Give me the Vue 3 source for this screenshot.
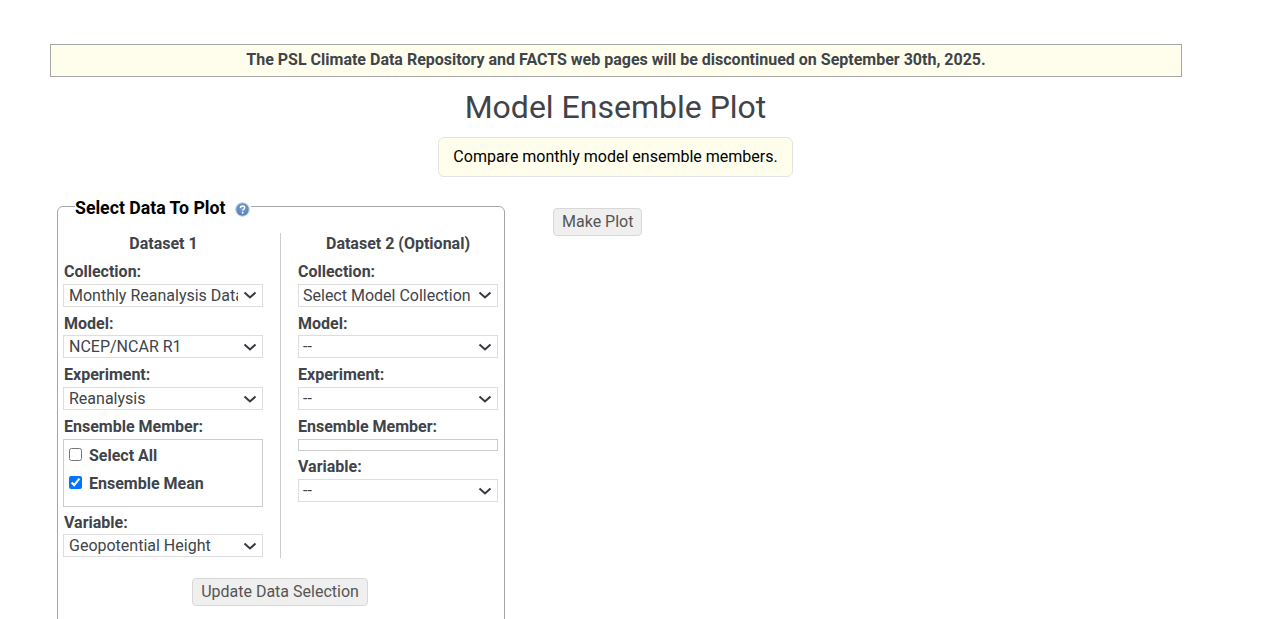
<script setup>
import { ref } from 'vue'

const first = [
  { label: 'Collection:', value: 'Monthly Reanalysis Data', options: ['Monthly Reanalysis Data'] },
  { label: 'Model:', value: 'NCEP/NCAR R1', options: ['NCEP/NCAR R1'] },
  { label: 'Experiment:', value: 'Reanalysis', options: ['Reanalysis'] },
]
const second = [
  { label: 'Collection:', value: 'Select Model Collection', options: ['Select Model Collection'] },
  { label: 'Model:', value: '--', options: ['--'] },
  { label: 'Experiment:', value: '--', options: ['--'] },
]

const selectAll = ref(false)
const ensembleMean = ref(true)
</script>

<template>
  <div class="page">
    <div class="banner">The PSL Climate Data Repository and FACTS web pages will be discontinued on September 30th, 2025.</div>
    <h1 class="title">Model Ensemble Plot</h1>
    <div class="note-row">
      <div class="note">Compare monthly model ensemble members.</div>
    </div>

    <div class="main">
      <fieldset class="panel">
        <legend class="panel-title">
          Select Data To Plot
          <svg class="help" viewBox="0 0 16 16" width="15" height="15">
            <defs>
              <radialGradient id="helpfill" cx="50%" cy="40%" r="60%">
                <stop offset="0" stop-color="#7ea3d6" />
                <stop offset="1" stop-color="#4f7db8" />
              </radialGradient>
            </defs>
            <circle cx="8" cy="8" r="7.2" fill="url(#helpfill)" stroke="#c5d3e6" stroke-width="1.2" />
            <path d="M5.8 6.3c0-1.3 1-2 2.3-2s2.2.8 2.2 1.9c0 1.6-2 1.6-2 3.1" fill="none" stroke="#fff" stroke-width="1.5" />
            <circle cx="8.2" cy="11.5" r="1" fill="#fff" />
          </svg>
        </legend>

        <div class="columns">
          <div class="col col-left">
            <div class="col-title">Dataset 1</div>
            <div v-for="f in first" :key="f.label" class="field">
              <label class="lbl">{{ f.label }}</label>
              <select class="sel" :value="f.value">
                <option v-for="o in f.options" :key="o">{{ o }}</option>
              </select>
            </div>
            <div class="field">
              <label class="lbl">Ensemble Member:</label>
              <div class="members">
                <label class="member"><input type="checkbox" v-model="selectAll" /> Select All</label>
                <label class="member"><input type="checkbox" v-model="ensembleMean" /> Ensemble Mean</label>
              </div>
            </div>
            <div class="field">
              <label class="lbl">Variable:</label>
              <select class="sel">
                <option>Geopotential Height</option>
              </select>
            </div>
          </div>

          <div class="col col-right">
            <div class="col-title">Dataset 2 (Optional)</div>
            <div v-for="f in second" :key="f.label" class="field">
              <label class="lbl">{{ f.label }}</label>
              <select class="sel" :value="f.value">
                <option v-for="o in f.options" :key="o">{{ o }}</option>
              </select>
            </div>
            <div class="field">
              <label class="lbl">Ensemble Member:</label>
              <div class="members-empty"></div>
            </div>
            <div class="field">
              <label class="lbl">Variable:</label>
              <select class="sel">
                <option>--</option>
              </select>
            </div>
          </div>
        </div>

        <div class="update-row">
          <button class="btn update-btn" type="button">Update Data Selection</button>
        </div>
      </fieldset>

      <button class="btn plot-btn" type="button">Make Plot</button>
    </div>
  </div>
</template>

<style scoped>
.page {
  width: 1132px;
  margin-left: 50px;
  padding-top: 44px;
  font-family: Roboto, "Liberation Sans", sans-serif;
  font-size: 16px;
  color: #40444a;
}
.banner {
  height: 33px;
  line-height: 29px;
  box-sizing: border-box;
  border: 1px solid #a6a6a6;
  background: #fffeec;
  text-align: center;
  font-weight: 700;
}
.title {
  margin: 8px 1px 0 0;
  font-size: 32px;
  font-weight: 400;
  line-height: 44px;
  text-align: center;
  color: #40444a;
}
.note-row {
  display: flex;
  justify-content: center;
  margin-top: 8px;
  padding-right: 1px;
}
.note {
  height: 40px;
  box-sizing: border-box;
  padding: 0 14px;
  line-height: 38px;
  border: 1px solid #e3e3e3;
  border-radius: 6px;
  background: #fffeec;
  color: #000;
}
.main {
  display: flex;
  align-items: flex-start;
  margin-top: 15px;
  padding-left: 7px;
}
.panel {
  width: 448px;
  box-sizing: border-box;
  margin: 0;
  padding: 0 6px 60px 5px;
  border: 1px solid #a6a6a6;
  border-radius: 6px;
}
.panel-title {
  padding: 4px 1px 0 0;
  margin-left: 12px;
  font-size: 17.7px;
  font-weight: 700;
  color: #000;
  line-height: 24px;
}
.help {
  vertical-align: -3px;
  margin-left: 5px;
}
.columns {
  display: flex;
  margin-top: 13px;
}
.col {
  width: 200px;
}
.col-left {
  padding-right: 17px;
  border-right: 1px solid #ccc;
  height: 325px;
}
.col-right {
  margin-left: 17px;
}
.col-title {
  font-weight: 700;
  text-align: center;
  line-height: 21px;
  height: 21px;
}
.col-left .col-title {
  padding-left: 1px;
}
.field {
  margin-top: 5.7px;
}
.col-title + .field {
  margin-top: 7px;
}
.lbl {
  display: block;
  font-weight: 700;
  line-height: 21px;
  height: 21px;
}
.col-left .lbl {
  padding-left: 1px;
}
.sel {
  display: block;
  width: 100%;
  height: 23px;
  margin-top: 1.9px;
  box-sizing: border-box;
  padding: 0 24px 0 5px;
  border: 1px solid #ddd;
  border-radius: 0;
  appearance: none;
  background: #fff url("data:image/svg+xml,%3Csvg xmlns='http://www.w3.org/2000/svg' width='14' height='8' viewBox='0 0 14 8'%3E%3Cpath d='M1.5 1.5 7 6.5l5.5-5' fill='none' stroke='%23343a40' stroke-width='2'/%3E%3C/svg%3E") no-repeat right 5px center;
  font-family: inherit;
  font-size: 16px;
  color: #40444a;
}
.col-right .sel {
  padding-left: 4px;
}
.members {
  height: 68px;
  box-sizing: border-box;
  margin-top: 1.9px;
  margin-bottom: -0.75px;
  padding: 1px 5px;
  border: 1px solid #ccc;
}
.member {
  display: flex;
  align-items: center;
  gap: 7px;
  height: 28px;
  box-sizing: border-box;
  padding-top: 2px;
  font-weight: 700;
}
.member input {
  width: 13px;
  height: 13px;
  margin: 0 0 2px;
}
.members-empty {
  height: 12px;
  margin-top: 1.9px;
  box-sizing: border-box;
  border: 1px solid #ccc;
}
.update-row {
  display: flex;
  justify-content: center;
  margin-top: 20px;
  padding-right: 1px;
}
.btn {
  height: 28px;
  box-sizing: border-box;
  padding: 0 8px 2px;
  border: 1px solid #d8d8d8;
  border-radius: 4px;
  background: #efefef;
  font-family: inherit;
  font-size: 16px;
  color: #555;
}
.update-btn {
  padding: 0 8.5px 2px;
}
.plot-btn {
  margin-left: 48px;
  margin-top: 16px;
}
</style>

<style>
html, body {
  overflow: hidden;
  background: #fff;
}
</style>
